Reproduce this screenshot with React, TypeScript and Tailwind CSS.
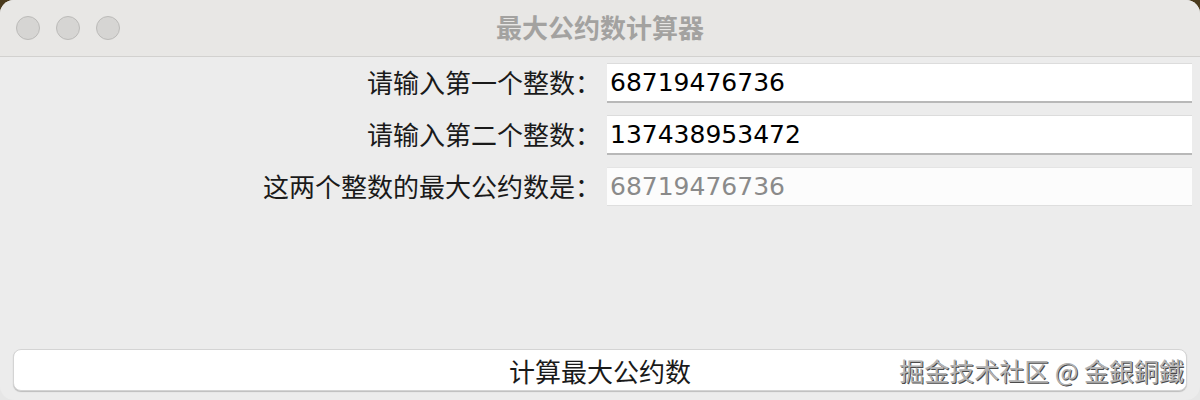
const rows = [
  { label: "请输入第一个整数：", value: "68719476736", readOnly: false },
  { label: "请输入第二个整数：", value: "137438953472", readOnly: false },
  { label: "这两个整数的最大公约数是：", value: "68719476736", readOnly: true },
];

export default function App() {
  return (
    <div className="h-[400px] w-[1200px] bg-[linear-gradient(180deg,#4a3a1c_0%,#3a3a2e_50%,#e6e6e6_50%)] [font-family:'Noto_Sans_CJK_SC',sans-serif]">
      <div className="flex h-full flex-col overflow-hidden rounded-[14px] bg-[#ececec]">
        {/* title bar */}
        <div className="relative flex h-[57px] shrink-0 items-center border-b border-[#d2d1cf] bg-[#e8e7e5]">
          <div className="flex gap-[16px] pl-[16px]">
            <span className="h-[24px] w-[24px] rounded-full border border-[#bcbbb9] bg-[#d6d5d3]" />
            <span className="h-[24px] w-[24px] rounded-full border border-[#bcbbb9] bg-[#d6d5d3]" />
            <span className="h-[24px] w-[24px] rounded-full border border-[#bcbbb9] bg-[#d6d5d3]" />
          </div>
          <div className="absolute inset-x-0 top-[9px] text-center text-[26px] leading-[36px] font-bold text-[#a3a2a0]">
            最大公约数计算器
          </div>
        </div>

        {/* form */}
        <div className="flex flex-col gap-[14px] pt-[6px]">
          {rows.map((row) => (
            <div key={row.label} className="flex h-[38px] items-center">
              <div className="w-[607px] shrink-0 pr-[6px] text-right text-[26px] leading-[38px] text-[#1a1a1a]">
                {row.label}
              </div>
              <div
                className={
                  row.readOnly
                    ? "mr-[8px] flex h-[38px] flex-1 items-center border-t border-[#e4e4e4] bg-[#fcfcfc] pl-[3px] text-[25px] text-[#8a8a8a] shadow-[0_1px_0_#dedede] [font-family:'DejaVu_Sans',sans-serif]"
                    : "mr-[8px] flex h-[38px] flex-1 items-center border-t border-[#dcdcdc] bg-white pl-[3px] text-[25px] text-black shadow-[0_2px_0_#b8b8b8] [font-family:'DejaVu_Sans',sans-serif]"
                }
              >
                {row.value}
              </div>
            </div>
          ))}
        </div>

        <div className="flex-1" />

        {/* button */}
        <div className="relative mx-[13px] mb-[9px] flex h-[42px] items-center justify-center rounded-[8px] border border-[#d4d4d4] bg-white text-[26px] text-[#1a1a1a] shadow-[0_1px_1px_#bdbdbd]">
          计算最大公约数
          <span className="absolute right-[2px] top-[3px] text-[25px] leading-[34px] text-[#b2b2b2] [text-shadow:1px_1px_0_#4a4a4a,-1px_-1px_0_#fff]">
            掘金技术社区 @ 金銀銅鐵
          </span>
        </div>
      </div>
    </div>
  );
}
